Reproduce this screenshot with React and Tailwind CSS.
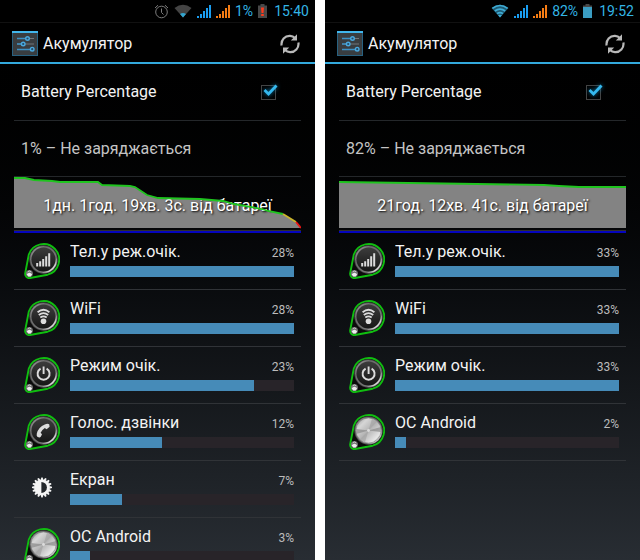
import { useState } from "react";

const SCREENS = [
  {
    id: "empty",
    alarm: true,
    wifi: "weak",
    percent: "1%",
    low: true,
    time: "15:40",
    status: "1% – Не заряджається",
    duration: "1дн. 1год. 19хв. 3с. від батареї",
    area: "0,1 11,1 20,3 38,4 46,5 84,5 88,8 116,9 121,10 127,14 133,18 144,21 186,22 209,24 220,27 248,32 254,34 269,37 282,45 287,51",
    segments: [
      { color: "#1fc41f", points: "0,1 11,1 20,3 38,4 46,5 84,5 88,8 116,9 121,10 127,14 133,18 144,21 186,22 209,24 220,27 248,32 254,34 269,37" },
      { color: "#cbb52a", points: "269,37 282,45" },
      { color: "#f01414", points: "282,45 287,51" },
    ],
    usage: [
      { name: "Тел.у реж.очік.", icon: "signal", percent: 28, bar: 100 },
      { name: "WiFi", icon: "wifi", percent: 28, bar: 100 },
      { name: "Режим очік.", icon: "power", percent: 23, bar: 82 },
      { name: "Голос. дзвінки", icon: "phone", percent: 12, bar: 41 },
      { name: "Екран", icon: "screen", percent: 7, bar: 23 },
      { name: "ОС Android", icon: "metal", percent: 3, bar: 9 },
    ],
  },
  {
    id: "charged",
    alarm: false,
    wifi: "full",
    percent: "82%",
    low: false,
    time: "19:52",
    status: "82% – Не заряджається",
    duration: "21год. 12хв. 41с. від батареї",
    area: "0,5 70,6 205,8 220,9 240,10 287,10",
    segments: [{ color: "#1fc41f", points: "0,5 70,6 205,8 220,9 240,10 287,10" }],
    usage: [
      { name: "Тел.у реж.очік.", icon: "signal", percent: 33, bar: 100 },
      { name: "WiFi", icon: "wifi", percent: 33, bar: 100 },
      { name: "Режим очік.", icon: "power", percent: 33, bar: 100 },
      { name: "ОС Android", icon: "metal", percent: 2, bar: 5 },
    ],
  },
];

function AlarmIcon() {
  return (
    <svg width="15" height="15" viewBox="0 0 15 15" fill="none" stroke="#7c7c7c">
      <circle cx="7.5" cy="8" r="5.8" />
      <path d="M7.5 4.5V8.5L9.5 10.5M1 4L4 1.2M14 4L11 1.2" />
    </svg>
  );
}

function WifiIcon({ level }) {
  if (level === "weak") {
    return (
      <svg width="18" height="14" viewBox="0 0 18 14">
        <path d="M0.5 4Q9 -2.5 17.5 4L9 13.5Z" fill="#444" />
        <path d="M6 10Q9 8 12 10L9 13.5Z" fill="#33a5cf" />
      </svg>
    );
  }
  return (
    <svg width="18" height="14" viewBox="0 0 18 14">
      <path d="M0.5 4Q9 -2.5 17.5 4L9 13.5Z" fill="#1d5a72" />
      <path
        d="M1.4 4.4Q9 -1.4 16.6 4.4M3.8 7Q9 3.2 14.2 7M6 9.6Q9 7.6 12 9.6"
        fill="none"
        stroke="#3fabd4"
        strokeWidth="1.7"
      />
      <path d="M7 11.3Q9 10.2 11 11.3L9 13.5Z" fill="#3fabd4" />
    </svg>
  );
}

function SignalIcon({ color }) {
  return (
    <svg width="14" height="14" viewBox="0 0 14 14" fill={color}>
      <path d="M0 12h2v2H0zM3 10h2v4H3zM6 7h2v7H6zM9 4h2v10H9zM12 1h2v13H12z" />
    </svg>
  );
}

function BatteryIcon({ low }) {
  return (
    <svg width="9" height="14" viewBox="0 0 9 14">
      <path d="M2.5 0h4v1.5H9V14H0V1.5h2.5z" fill="#484848" />
      {low ? (
        <path d="M3 3.5h3L5.5 9h-2zM3.2 10h2.6v2H3.2z" fill="#ff3a1c" />
      ) : (
        <path d="M0 3h9v11H0z" fill="#3b9dc2" />
      )}
    </svg>
  );
}

function SettingsIcon() {
  return (
    <svg width="26" height="25" viewBox="0 0 26 25">
      <rect width="26" height="25" rx="1" fill="#3d4246" />
      <rect x="1" y="2" width="24" height="22" fill="#393d40" />
      <path d="M0 0h26v2H0z" fill="#41b6ec" />
      <path d="M0 2h1v22H0zM25 2h1v22h-1zM0 24h26v1H0z" fill="#286180" />
      <path d="M5 7.5h17M5 13h17M5 18.5h17" stroke="#71777b" strokeWidth="1" />
      <path d="M5 7.5h9M5 13h5M5 18.5h14" stroke="#3d91c4" strokeWidth="1.4" />
      <g fill="#254b65" stroke="#4aa9df" strokeWidth="1.4">
        <circle cx="15.5" cy="7.5" r="1.8" />
        <circle cx="11.2" cy="13" r="1.8" />
        <circle cx="20.2" cy="18.2" r="1.8" />
      </g>
    </svg>
  );
}

function RefreshIcon() {
  return (
    <svg width="20" height="20" viewBox="0 0 20 20" fill="none" stroke="#b9b9b9" strokeWidth="2.2">
      <path d="M1.6 11.5C0.8 6 5 1.6 10 1.8C12 1.9 13.6 2.6 15 4" />
      <path d="M18.4 8.5C19.2 14 15 18.4 10 18.2C8 18.1 6.4 17.4 5 16" />
      <path d="M17 0.3V6.5H10.8ZM3 19.7V13.5H9.2Z" fill="#b9b9b9" stroke="none" />
    </svg>
  );
}

function KnobGlyph({ icon }) {
  if (icon === "signal") {
    return <path d="M12.2 20h2v3.5h-2zM15.2 18.3h2v5.2h-2zM18.2 16h2v7.5h-2zM21.2 13.3h2v10.2h-2zM24.2 10.2h2v13.3h-2z" fill="#dcdcdc" />;
  }
  if (icon === "wifi") {
    return (
      <g fill="none" stroke="#dcdcdc" strokeWidth="1.8">
        <path d="M13.6 12.2Q19.5 7.4 25.4 12.2M14.8 15Q19.5 11.3 24.2 15M16.3 17.6Q19.5 15.3 22.7 17.6" />
        <circle cx="19.5" cy="21.3" r="2.8" fill="#dcdcdc" stroke="none" />
      </g>
    );
  }
  if (icon === "power") {
    return (
      <g fill="none" stroke="#dcdcdc" strokeWidth="1.9">
        <path d="M16.6 11.6A6 6 0 1 0 22.6 11.6" />
        <path d="M19.6 9.5V17" />
      </g>
    );
  }
  if (icon === "phone") {
    return (
      <path
        d="M13.3 22.8L15.2 23.6Q16.7 23.8 17.3 21.8L18 20.3L16.6 18.8Q18 15.8 20.8 14L22.6 15.3L25.6 12.8L25.2 10.2Q23.5 9.1 20.8 10.4Q14.5 13 12.8 19.4Q12.3 21.6 13.3 22.8Z"
        fill="#dcdcdc"
      />
    );
  }
  return null;
}

function ScreenIcon() {
  const teeth = Array.from({ length: 16 }, (_, i) => i * 22.5);
  return (
    <svg width="36" height="36" viewBox="0 0 36 36" className="mt-px shrink-0">
      <g fill="#f4f4f4">
        {teeth.map((angle) => (
          <path key={angle} d="M16.6 9L17.3 6.4H18.7L19.4 9Z" transform={`rotate(${angle} 18 16.4)`} />
        ))}
        <circle cx="18" cy="16.4" r="8" />
      </g>
      <path d="M17.4 10.9A5.5 5.5 0 0 1 17.4 21.9Z" fill="#23272b" />
    </svg>
  );
}

function KnobIcon({ icon, id }) {
  const metal = icon === "metal";
  return (
    <svg width="36" height="36" viewBox="0 0 36 36" className="mt-px shrink-0">
      <defs>
        <linearGradient id={`${id}-rim`} x1="0" y1="0" x2="1" y2="1">
          <stop offset="0" stopColor="#b5b5b5" />
          <stop offset="0.3" stopColor="#6a6a6a" />
          <stop offset="0.7" stopColor="#777" />
          <stop offset="0.85" stopColor="#eee" />
          <stop offset="1" stopColor="#666" />
        </linearGradient>
        <linearGradient id={`${id}-face`} x1="0" y1="0" x2="0" y2="1">
          <stop offset="0" stopColor="#3c3c3c" />
          <stop offset="1" stopColor="#161616" />
        </linearGradient>
        <linearGradient id={`${id}-steel`} x1="0" y1="0" x2="1" y2="1">
          <stop offset="0" stopColor="#8f8f8f" />
          <stop offset="0.25" stopColor="#d6d6d6" />
          <stop offset="0.5" stopColor="#b4b4b4" />
          <stop offset="0.8" stopColor="#e6e6e6" />
          <stop offset="1" stopColor="#999" />
        </linearGradient>
      </defs>
      <path
        d="M4.8 11.5A15.6 15.6 0 1 1 23.6 31.7L6 35A4.1 4.1 0 0 1 1.2 30.2Z"
        fill="#0b0b0b"
        stroke="#10bd10"
        strokeWidth="1.9"
      />
      <circle cx="19.5" cy="16.5" r="14" fill={`url(#${id}-rim)`} stroke="#2c2c2c" strokeWidth="0.5" />
      {metal ? (
        <>
          <circle cx="19.5" cy="16.5" r="12.6" fill={`url(#${id}-steel)`} stroke="#7b7b7b" strokeWidth="0.6" />
          <path d="M19.5 16.5L7.2 15V20ZM19.5 16.5L31.8 13V18Z" fill="#8a8a8a" opacity="0.7" />
          <path d="M19.5 16.5L23 4.8L28 7.6ZM19.5 16.5L16 28.3L11 25.4Z" fill="#a0a0a0" opacity="0.6" />
          <circle cx="19.5" cy="16.5" r="1.4" fill="#dcdcdc" />
        </>
      ) : (
        <circle cx="19.5" cy="16.5" r="12" fill={`url(#${id}-face)`} />
      )}
      <KnobGlyph icon={icon} />
      <circle cx="5.4" cy="30.4" r="3.5" fill="#777" />
      <path d="M2.7 31.3Q5.4 28.3 8.1 31.3L6.7 33.4H4.2Z" fill="#eee" />
      <path d="M3.8 28.8Q5.4 27.1 7 28.8" fill="none" stroke="#ccc" strokeWidth="0.9" />
    </svg>
  );
}

function StatusBar({ screen }) {
  return (
    <div className="flex h-[22px] items-center justify-end gap-[5px] bg-black pr-[6px] text-sm leading-5 text-[#33b5e5]">
      {screen.alarm && <AlarmIcon />}
      <WifiIcon level={screen.wifi} />
      <SignalIcon color="#1a9df0" />
      <SignalIcon color="#f57c14" />
      <span>{screen.percent}</span>
      <BatteryIcon low={screen.low} />
      <span className="pl-[2px]">{screen.time}</span>
    </div>
  );
}

function HistoryChart({ screen }) {
  return (
    <div className="relative">
      <svg className="block h-[56px] w-full" viewBox="0 0 287 56" preserveAspectRatio="none">
        <polygon points={`${screen.area} 287,51 0,51`} fill="#838383" />
        <path d="M0 53.5H287" stroke="#30302a" />
        <path d="M0 55H287" stroke="#0505bd" strokeWidth="2" />
      </svg>
      <p className="absolute inset-x-0 top-[19px] text-center text-base leading-5 whitespace-nowrap text-white [text-shadow:1px_1px_2px_#000]">
        {screen.duration}
      </p>
      {/* the level line runs over the caption */}
      <svg className="absolute inset-0 h-full w-full" viewBox="0 0 287 56" preserveAspectRatio="none">
        {screen.segments.map((s) => (
          <polyline key={s.color} points={s.points} fill="none" stroke={s.color} strokeWidth="1.8" />
        ))}
      </svg>
    </div>
  );
}

function UsageRow({ item, id }) {
  return (
    <li className="flex h-[57px] gap-[10px] border-b border-[#303337] pt-[9px] pr-[7px] pl-[10px]">
      {item.icon === "screen" ? <ScreenIcon /> : <KnobIcon icon={item.icon} id={id} />}
      <div className="min-w-0 flex-1">
        <div className="flex items-baseline justify-between leading-5">
          <span className="truncate text-base leading-5">{item.name}</span>
          <span className="text-xs leading-5 text-[#bcbcbc]">{item.percent}%</span>
        </div>
        <div className="mt-[3px] h-[11px] bg-[#282429]">
          <div className="h-full bg-[#468bb8]" style={{ width: `${item.bar}%` }} />
        </div>
      </div>
    </li>
  );
}

function BatteryScreen({ screen }) {
  const [showPercentage, setShowPercentage] = useState(true);

  return (
    <section className="min-w-0 flex-1 overflow-hidden bg-linear-to-b from-black to-[#282d33] text-[#f3f3f3]">
      <StatusBar screen={screen} />
      <header className="flex h-[42px] items-center gap-[5px] border-t border-b-2 border-t-[#111] border-b-[#33a9dc] bg-black pt-[2px] pr-[15px] pl-3">
        <SettingsIcon />
        <h1 className="flex-1 text-base leading-5">Акумулятор</h1>
        <button type="button" aria-label="Оновити">
          <RefreshIcon />
        </button>
      </header>

      <div className="px-[14px]">
        <label className="flex h-[57px] items-center justify-between border-b border-[#24272a] pr-[25px] pl-[7px] text-base leading-5">
          Battery Percentage
          <span className="relative h-[15px] w-[15px]">
            <input
              type="checkbox"
              checked={showPercentage}
              onChange={(e) => setShowPercentage(e.target.checked)}
              className="block h-[15px] w-[15px] appearance-none border border-[#444]"
            />
            {showPercentage && (
              <svg
                className="pointer-events-none absolute -top-px left-[2px] drop-shadow-[0_0_2px_#0b78a8]"
                width="15"
                height="13"
                viewBox="0 0 15 13"
                fill="none"
              >
                <path d="M1.5 6L5.5 10L13.5 1.5" stroke="#35b8ee" strokeWidth="2.8" />
              </svg>
            )}
          </span>
        </label>
        <p className="flex h-[56px] items-center border-b border-[#24272a] pl-[7px] text-base leading-5 text-[#c4c4c4]">
          {screen.status}
        </p>
        <HistoryChart screen={screen} />
        <ul>
          {screen.usage.map((item) => (
            <UsageRow key={item.name} item={item} id={`${screen.id}-${item.icon}`} />
          ))}
        </ul>
      </div>
    </section>
  );
}

export default function App() {
  return (
    <main className="flex h-screen gap-[10px] bg-white font-[Roboto,'Noto_Sans',sans-serif]">
      {SCREENS.map((screen) => (
        <BatteryScreen key={screen.id} screen={screen} />
      ))}
    </main>
  );
}
